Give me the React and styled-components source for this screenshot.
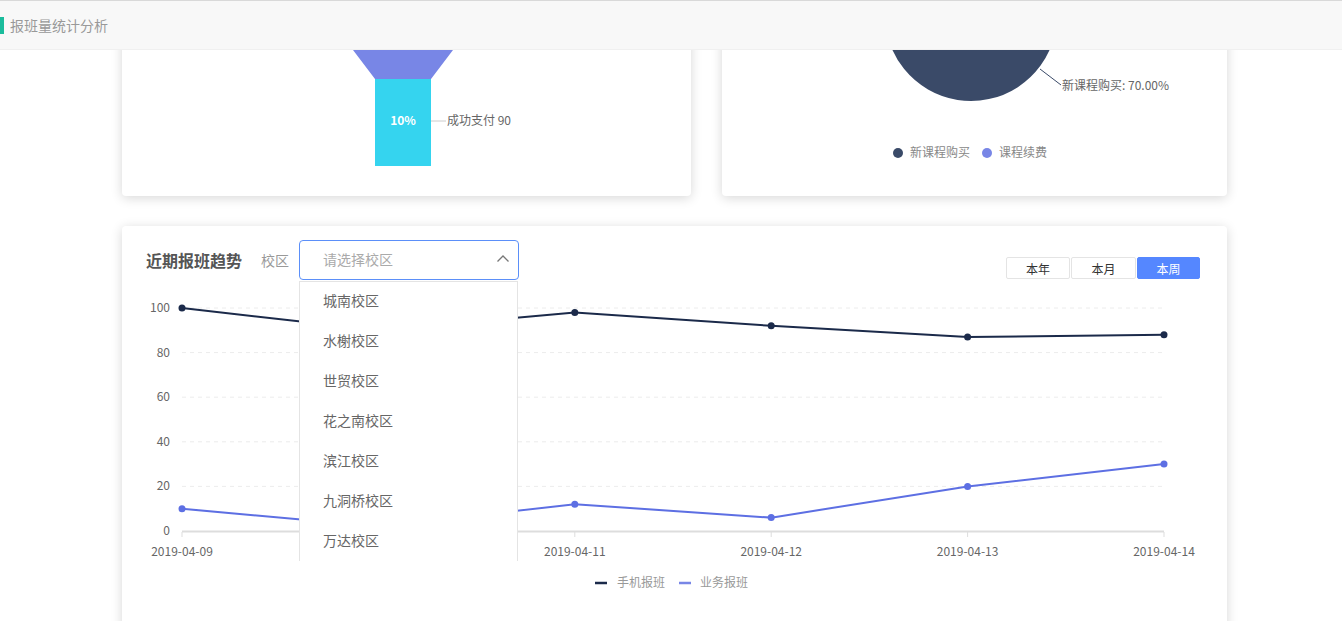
import React from "react";
import styled, { createGlobalStyle } from "styled-components";

const GlobalStyle = createGlobalStyle`
  html, body {
    margin: 0;
    padding: 0;
    background: #fff;
    overflow: hidden;
    font-family: "Noto Sans CJK SC", "Noto Sans", sans-serif;
  }
`;

const Page = styled.div`
  width: 1342px;
  height: 621px;
  display: flex;
  flex-direction: column;
  overflow: hidden;
`;

const TopBar = styled.div`
  flex: none;
  height: 48px;
  display: flex;
  align-items: center;
  background: #f8f8f8;
  border-top: 1px solid #d9d9d9;
  border-bottom: 1px solid #f0f0f0;
  position: relative;
  z-index: 2;
`;

const Mark = styled.span`
  width: 4px;
  height: 17px;
  background: #1abc9c;
  margin-right: 6px;
`;

const PageTitle = styled.span`
  font-size: 14px;
  color: #999;
`;

const Viewport = styled.div`
  flex: 1;
  overflow: hidden;
`;

const Main = styled.div`
  width: 1105px;
  margin-left: 122px;
  margin-top: -154px;
  display: flex;
  flex-direction: column;
  gap: 30px;
`;

const Row = styled.div`
  display: flex;
  gap: 31px;
`;

const Card = styled.div`
  background: #fff;
  border-radius: 4px;
  box-shadow: 0 2px 12px rgba(0, 0, 0, 0.16);
  width: ${(p) => p.$w}px;
  height: ${(p) => p.$h}px;
  position: relative;
  box-sizing: border-box;
`;

const ChartSvg = styled.svg`
  display: block;
  font-family: "Noto Sans CJK SC", "Noto Sans", sans-serif;
`;

const TrendSvg = styled(ChartSvg)`
  margin-top: 11px;
`;

const TrendHead = styled.div`
  display: flex;
  align-items: center;
  height: 40px;
  padding: 14px 27px 0 24px;
`;

const TrendTitle = styled.h3`
  margin: 0;
  font-size: 16px;
  font-weight: bold;
  color: #555;
`;

const FieldLabel = styled.span`
  margin-left: 19px;
  margin-right: 10px;
  font-size: 14px;
  color: #999;
`;

const SelectWrap = styled.div`
  position: relative;
  width: 220px;
`;

const SelectBox = styled.div`
  height: 40px;
  box-sizing: border-box;
  border: 1px solid #5b8ff9;
  border-radius: 4px;
  display: flex;
  align-items: center;
  justify-content: space-between;
  padding: 0 8px 2px 23px;
  font-size: 14px;
  color: #aaa;
`;

const Dropdown = styled.ul`
  position: absolute;
  top: 41px;
  left: 0;
  width: 219px;
  height: 280px;
  margin: 0;
  padding: 0;
  list-style: none;
  background: #fff;
  box-sizing: border-box;
  border: 1px solid #e4e4e4;
  border-bottom: none;
  overflow: hidden;
  z-index: 3;
`;

const Option = styled.li`
  height: 40px;
  line-height: 36px;
  padding-left: 23px;
  font-size: 14px;
  color: #666;
`;

const Tabs = styled.div`
  margin-left: auto;
  align-self: flex-end;
  margin-bottom: 1px;
  display: flex;
  gap: 1px;
`;

const Tab = styled.button`
  width: ${(p) => p.$w}px;
  height: 22px;
  padding: 0;
  border: 1px solid ${(p) => (p.$active ? "#5587ff" : "#e4e4e4")};
  border-radius: 2px;
  background: ${(p) => (p.$active ? "#5587ff" : "#fff")};
  color: ${(p) => (p.$active ? "#fff" : "#333")};
  font-family: inherit;
  font-size: 12px;
`;

const campuses = ["城南校区", "水榭校区", "世贸校区", "花之南校区", "滨江校区", "九洞桥校区", "万达校区"];
const dates = ["2019-04-09", "2019-04-10", "2019-04-11", "2019-04-12", "2019-04-13", "2019-04-14"];
const phone = [100, 90, 98, 92, 87, 88];
const business = [10, 2, 12, 6, 20, 30];

const X0 = 60;
const STEP = 196.4;
const yOf = (v) => 240 - v * 2.23;

const FunnelCard = () => (
  <Card $w={569} $h={300}>
    <ChartSvg width="569" height="300">
      <polygon points="181,96 381,96 331,154 309,183 253,183 231,154" fill="#7886e6" />
      <rect x="253" y="183" width="56" height="87" fill="#35d4ef" />
      <text x="281" y="229" textAnchor="middle" fontSize="12" fontWeight="bold" fill="#fff">10%</text>
      <line x1="309" y1="225" x2="324" y2="225" stroke="#ccc" />
      <text x="325" y="229" fontSize="12" fill="#666">成功支付 90</text>
    </ChartSvg>
  </Card>
);

const PieCard = () => {
  const cx = 249, cy = 119, r = 86;
  const pt = (deg) => {
    const a = (deg * Math.PI) / 180;
    return [cx + r * Math.sin(a), cy - r * Math.cos(a)];
  };
  const [ex, ey] = pt(252);
  return (
    <Card $w={505} $h={300}>
      <ChartSvg width="505" height="300">
        <path d={`M${cx},${cy} L${cx},${cy - r} A${r},${r} 0 1 1 ${ex},${ey} Z`} fill="#3a4a68" />
        <path d={`M${cx},${cy} L${ex},${ey} A${r},${r} 0 0 1 ${cx},${cy - r} Z`} fill="#7886e6" />
        <polyline points="318,173 339,189" fill="none" stroke="#3a4a68" />
        <text x="340" y="194" fontSize="12" fill="#666">新课程购买: 70.00%</text>
        <circle cx="176" cy="257" r="5" fill="#3a4a68" />
        <text x="188" y="261" fontSize="12" fill="#888">新课程购买</text>
        <circle cx="265" cy="257" r="5" fill="#7886e6" />
        <text x="277" y="261" fontSize="12" fill="#888">课程续费</text>
      </ChartSvg>
    </Card>
  );
};

const TrendChart = () => {
  const line = (data) => data.map((v, i) => `${X0 + i * STEP},${yOf(v)}`).join(" ");
  return (
    <TrendSvg width="1105" height="320">
      {[0, 20, 40, 60, 80, 100].map((v) => (
        <g key={v}>
          {v > 0 && (
            <line x1={X0} x2={X0 + 5 * STEP} y1={yOf(v)} y2={yOf(v)} stroke="#ececec" strokeDasharray="4 4" />
          )}
          <text x="48" y={yOf(v) + 4} textAnchor="end" fontSize="12" fill="#666">{v}</text>
        </g>
      ))}
      <line x1={X0} x2={X0 + 5 * STEP} y1="240.5" y2="240.5" stroke="#ddd" strokeWidth="2" />
      {dates.map((d, i) => (
        <g key={d}>
          <line x1={X0 + i * STEP} x2={X0 + i * STEP} y1="241" y2="246" stroke="#ddd" />
          {/* the 04-10 label sits under the open dropdown */}
          {i !== 1 && (
            <text x={X0 + i * STEP} y="265" textAnchor="middle" fontSize="12" fill="#666">{d}</text>
          )}
        </g>
      ))}
      <polyline points={line(phone)} fill="none" stroke="#1b2a4a" strokeWidth="2" />
      {phone.map((v, i) => (
        <circle key={i} cx={X0 + i * STEP} cy={yOf(v)} r="3.5" fill="#1b2a4a" />
      ))}
      <polyline points={line(business)} fill="none" stroke="#5d6fe3" strokeWidth="2" />
      {business.map((v, i) => (
        <circle key={i} cx={X0 + i * STEP} cy={yOf(v)} r="3.5" fill="#5d6fe3" />
      ))}
      <line x1="473" x2="485" y1="292" y2="292" stroke="#1b2a4a" strokeWidth="2.5" />
      <text x="495" y="296" fontSize="12" fill="#999">手机报班</text>
      <line x1="557" x2="569" y1="292" y2="292" stroke="#7886e6" strokeWidth="2.5" />
      <text x="578" y="296" fontSize="12" fill="#999">业务报班</text>
    </TrendSvg>
  );
};

const ChevronUp = () => (
  <svg width="14" height="14" viewBox="0 0 14 14">
    <polyline points="1.5,9.5 7,4 12.5,9.5" fill="none" stroke="#777" strokeWidth="1.3" />
  </svg>
);

export default function App() {
  return (
    <>
      <GlobalStyle />
      <Page>
        <TopBar>
          <Mark />
          <PageTitle>报班量统计分析</PageTitle>
        </TopBar>
        <Viewport>
          <Main>
            <Row>
              <FunnelCard />
              <PieCard />
            </Row>
            <Card $w={1105} $h={420}>
              <TrendHead>
                <TrendTitle>近期报班趋势</TrendTitle>
                <FieldLabel>校区</FieldLabel>
                <SelectWrap>
                  <SelectBox>
                    请选择校区
                    <ChevronUp />
                  </SelectBox>
                  <Dropdown>
                    {campuses.map((c) => (
                      <Option key={c}>{c}</Option>
                    ))}
                  </Dropdown>
                </SelectWrap>
                <Tabs>
                  <Tab $w={64}>本年</Tab>
                  <Tab $w={65}>本月</Tab>
                  <Tab $w={63} $active>本周</Tab>
                </Tabs>
              </TrendHead>
              <TrendChart />
            </Card>
          </Main>
        </Viewport>
      </Page>
    </>
  );
}
